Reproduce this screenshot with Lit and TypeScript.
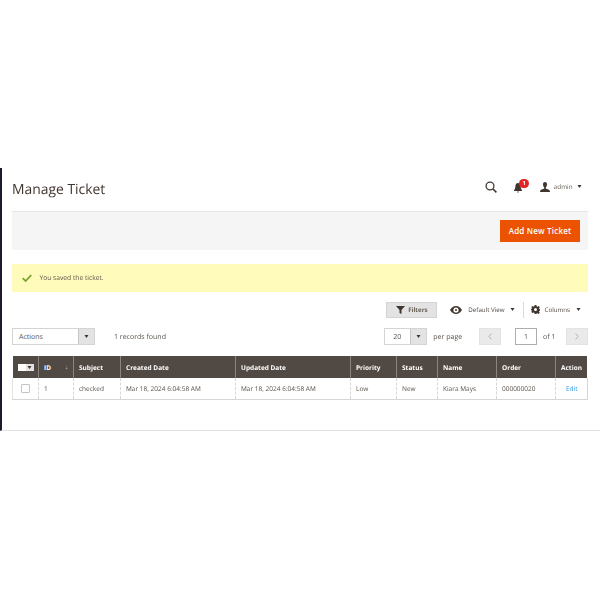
import { LitElement, html, css, svg } from "lit";
import { customElement } from "lit/decorators.js";

const caret = svg`<svg class="caret" width="5" height="3" viewBox="0 0 5 3"><path d="M.5 0h4L2.500 3z" fill="currentColor"/></svg>`;

@customElement("app-root")
export class AppRoot extends LitElement {
  static styles = css`
    :host { display: block; width: 600px; height: 600px; background: #fff; font-family: "Open Sans", sans-serif; color: #41362f; overflow: hidden; }
    * { box-sizing: border-box; }
    .shell { margin-top: 168px; height: 263px; border-left: 2px solid #1e1a2e; border-bottom: 1px solid #e3e3e3; padding: 0 12.5px 0 10px; display: flex; flex-direction: column; filter: blur(0.3px); text-rendering: geometricPrecision; }
    .head { height: 43px; display: flex; align-items: center; justify-content: space-between; }
    h1 { margin: 0; font-size: 13.9px; font-weight: 400; color: #41362f; line-height: 1; }
    .tools { display: flex; align-items: center; margin-right: 6px; margin-top: -5.5px; }
    .search { display: block; margin-right: 17px; }
    .bell { position: relative; width: 15px; height: 14px; margin-right: 11px; }
    .badge { position: absolute; left: 5.5px; top: -1px; width: 9.5px; height: 9.5px; border-radius: 50%; background: #e22626; color: #fff; font-size: 5.6px; font-weight: 700; line-height: 9.5px; text-align: center; }
    .user { display: flex; align-items: center; gap: 4px; font-size: 6.3px; color: #676056; }
    .caret { display: block; color: #41362f; flex: none; }
    .band { height: 38.5px; background: #f5f5f5; border-top: 1px solid #e6e6e6; display: flex; align-items: center; justify-content: flex-end; padding-right: 7.5px; }
    .add { height: 22.5px; width: 80px; border: 0; background: #eb5202; color: #fff; font: 600 8px "Open Sans", sans-serif; letter-spacing: 0.2px; padding: 0 0 1px; }
    .msg { margin-top: 14.5px; height: 27.5px; background: #fffbbb; display: flex; align-items: center; gap: 7.5px; padding-left: 10px; font-size: 6.7px; color: #5a524a; }
    .row1 { margin-top: 10px; height: 16.5px; display: flex; align-items: center; justify-content: flex-end; font-size: 6.2px; color: #514943; }
    .filters { width: 51px; height: 16.5px; background: #e3e3e3; border: 1px solid #d4d4d4; display: flex; align-items: center; justify-content: center; gap: 3px; font-weight: 700; font-size: 6.2px; color: #676056; margin-right: 13px; }
    .view { display: flex; align-items: center; gap: 6px; margin-right: 8px; }
    .view .caret { margin-left: -1px; }
    .divider { width: 1px; height: 16px; background: #d9d9d9; margin-right: 7px; }
    .cols { display: flex; align-items: center; gap: 5px; margin-right: 6.5px; }
    .cols .caret { margin-left: 1px; }
    .row2 { margin-top: 10px; height: 17px; display: flex; align-items: center; font-size: 7px; color: #5a524a; }
    .select { display: flex; border: 1px solid #d4d4d4; height: 17px; background: #fff; }
    .select .val { flex: 1; display: flex; align-items: center; padding-top: 1.5px; }
    .select .drop { width: 16px; background: #e3e3e3; display: flex; align-items: center; justify-content: center; border-left: 1px solid #c6c6c6; }
    .actions { width: 83px; }
    .actions .val { padding-left: 6px; }
    .found { margin-left: 19px; padding-top: 1.5px; }
    .spacer { flex: 1; }
    .pagesize { width: 43px; }
    .pagesize .val { padding-left: 8px; }
    .perpage { margin-left: 6px; margin-right: 17px; padding-top: 1.5px; }
    .pg { width: 22px; height: 17px; background: #eaeaea; border: 1px solid #e3e3e3; display: flex; align-items: center; justify-content: center; }
    .num { width: 22px; height: 17px; margin-left: 14px; border: 1px solid #adadad; display: flex; align-items: center; justify-content: center; background: #fff; padding-top: 1.5px; }
    .of { margin: 0 10px 0 6px; padding-top: 1.5px; }
    table { margin-top: 11px; width: 575.5px; border-collapse: collapse; table-layout: fixed; font-size: 6.5px; }
    th { height: 22px; background: #514943; color: #fff; font-weight: 700; text-align: left; padding: 0 5px; border-left: 1px solid #8a837e; font-size: 6.5px; white-space: nowrap; }
    th:first-child { border-left: 0; }
    th.id { position: relative; }
    .sort { position: absolute; right: 5px; top: 7px; font-weight: 400; font-size: 6px; color: #d8d4d1; }
    td { height: 21px; padding: 0 5px; color: #5a524a; border-left: 1px dashed #d6d6d6; border-bottom: 1px solid #d6d6d6; white-space: nowrap; }
    td:first-child { border-left: 1px solid #e3e3e3; }
    td:last-child { border-right: 1px solid #d6d6d6; }
    .hchk { display: flex; width: 16px; height: 7px; }
    .hchk i { display: block; width: 8px; background: #fff; }
    .hchk b { width: 8px; background: #e3e3e3; display: flex; align-items: center; justify-content: center; color: #41362f; }
    .chk { display: block; width: 9px; height: 9px; margin-left: 3px; background: #fff; border: 1px solid #c4c4c4; border-radius: 1px; }
    .edit { color: #2b9be8; padding-left: 10px; padding-top: 1px; }
  `;

  render() {
    return html`<div class="shell">
      <div class="head">
        <h1>Manage Ticket</h1>
        <div class="tools">
          <svg class="search" width="12" height="12" viewBox="0 0 12 12"><circle cx="5" cy="5" r="3.9" fill="none" stroke="#41362f" stroke-width="1.3"/><path d="M8 8l3.4 3.4" stroke="#41362f" stroke-width="1.6"/></svg>
          <div class="bell">
            <svg width="8" height="10" viewBox="0 0 8 10" style="position:absolute;left:0;top:3px"><path d="M4 0C2 0 1.4 2 1.3 4 1.2 5.700.6 6.500 0 7.200V8h8v-.8C7 6 6.700 4 6.600 3 6.400 1 6 0 4 0zM3 8.500h2L4 10z" fill="#41362f"/></svg>
            <span class="badge">1</span>
          </div>
          <div class="user">
            <svg width="10" height="10" viewBox="0 0 10 10"><path d="M3 2.200C3 .8 3.900 0 5 0s2 .8 2 2.200C7 3.800 6.300 5 5.800 5.400v1C7 7 10 7.400 10 9.500V10H0v-.5C0 7.400 3 7 4.200 6.400v-1C3.700 5 3 3.800 3 2.200z" fill="#41362f"/></svg>
            <span>admin</span>${caret}
          </div>
        </div>
      </div>
      <div class="band"><button class="add">Add New Ticket</button></div>
      <div class="msg">
        <svg width="10" height="8" viewBox="0 0 10 8"><path d="M.7 4.200 3.600 7 9.300 1" fill="none" stroke="#79a22e" stroke-width="1.800"/></svg>
        <span>You saved the ticket.</span>
      </div>
      <div class="row1">
        <div class="filters">
          <svg width="9" height="8" viewBox="0 0 9 8"><path d="M0 0h9L5.500 4v4L3.500 7V4z" fill="#41362f"/></svg>
          <span>Filters</span>
        </div>
        <div class="view">
          <svg width="12" height="8" viewBox="0 0 12 8"><path fill-rule="evenodd" d="M6 0c2.700 0 4.800 1.800 6 4-1.200 2.200-3.300 4-6 4S1.200 6.200 0 4c1.200-2.200 3.300-4 6-4zm0 1.400a2.600 2.600 0 1 0 0 5.200 2.600 2.600 0 0 0 0-5.200zM6 3a1 1 0 1 1 0 2 1 1 0 0 1 0-2z" fill="#41362f"/></svg>
          <span>Default View</span>${caret}
        </div>
        <div class="divider"></div>
        <div class="cols">
          <svg width="9" height="9" viewBox="0 0 9 9"><path fill-rule="evenodd" d="M3.600 0h1.800l.2 1.300.8.400L7.600 1 8.800 2.200 8 3.300l.3.800L9 4.300v1.400l-.7.200-.3.800.8 1.100-1.200 1.200-1.100-.7-.8.300L5.400 9H3.600l-.2-1.300-.8-.3-1.100.7L.3 6.900l.7-1.100-.3-.8L0 5.700V3.900l.7-.1.300-.8L.3 2 1.500.9l1.100.8.8-.4zM4.500 3a1.500 1.500 0 1 0 0 3 1.500 1.500 0 0 0 0-3z" fill="#41362f"/></svg>
          <span>Columns</span>${caret}
        </div>
      </div>
      <div class="row2">
        <div class="select actions"><div class="val">Actions</div><div class="drop">${caret}</div></div>
        <span class="found">1 records found</span>
        <span class="spacer"></span>
        <div class="select pagesize"><div class="val">20</div><div class="drop">${caret}</div></div>
        <span class="perpage">per page</span>
        <div class="pg"><svg width="4" height="7" viewBox="0 0 4 7"><path d="M3.500.5 .8 3.500l2.700 3" fill="none" stroke="#b5b5b5"/></svg></div>
        <div class="num">1</div>
        <span class="of">of 1</span>
        <div class="pg"><svg width="4" height="7" viewBox="0 0 4 7"><path d="M.5.5l2.700 3-2.700 3" fill="none" stroke="#b5b5b5"/></svg></div>
      </div>
      <table>
        <colgroup><col style="width:26px"><col style="width:35px"><col style="width:47px"><col style="width:115px"><col style="width:115px"><col style="width:46px"><col style="width:41px"><col style="width:59px"><col style="width:59px"><col></colgroup>
        <thead><tr>
          <th><div class="hchk"><i></i><b>${caret}</b></div></th>
          <th class="id">ID<span class="sort">↓</span></th><th>Subject</th><th>Created Date</th><th>Updated Date</th><th>Priority</th><th>Status</th><th>Name</th><th>Order</th><th>Action</th>
        </tr></thead>
        <tbody><tr>
          <td><span class="chk"></span></td>
          <td>1</td><td>checked</td><td>Mar 18, 2024 6:04:58 AM</td><td>Mar 18, 2024 6:04:58 AM</td><td>Low</td><td>New</td><td>Kiara Mays</td><td>000000020</td><td class="edit">Edit</td>
        </tr></tbody>
      </table>
    </div>`;
  }
}
